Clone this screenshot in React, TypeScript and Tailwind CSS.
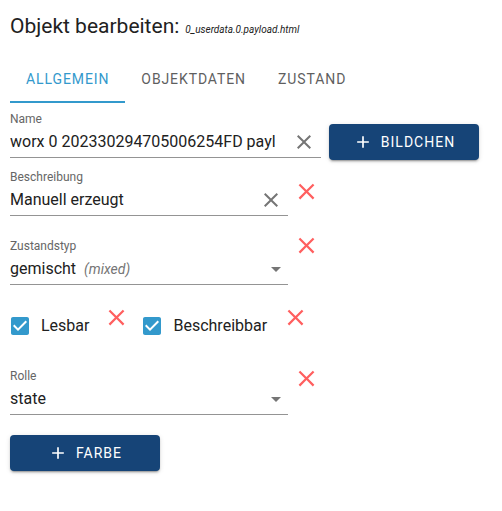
import React from "react";

const closePath =
  "M19 6.41 17.59 5 12 10.59 6.41 5 5 6.41 10.59 12 5 17.59 6.41 19 12 13.41 17.59 19 19 17.59 13.41 12z";

const CloseIcon = ({ size, className }: { size: number; className?: string }) => (
  <svg width={size} height={size} viewBox="0 0 24 24" className={className} fill="currentColor">
    <path d={closePath} />
  </svg>
);

const AddIcon = () => (
  <svg width={20} height={20} viewBox="0 0 24 24" fill="currentColor">
    <path d="M19 13h-6v6h-2v-6H5v-2h6V5h2v6h6v2z" />
  </svg>
);

const ArrowDrop = () => (
  <svg width={24} height={24} viewBox="0 0 24 24" fill="currentColor" className="text-[#757575]">
    <path d="M7 10l5 5 5-5z" />
  </svg>
);

const CheckBoxIcon = () => (
  <svg width={24} height={24} viewBox="0 0 24 24" className="text-[#3399cc]" fill="currentColor">
    <path d="M19 3H5c-1.11 0-2 .9-2 2v14c0 1.1.89 2 2 2h14c1.11 0 2-.9 2-2V5c0-1.1-.89-2-2-2zm-9 14-5-5 1.41-1.41L10 14.17l7.59-7.59L19 8l-9 9z" />
  </svg>
);

const RedX = ({ className }: { className?: string }) => (
  <CloseIcon size={27} className={`text-[#ff5f5f] shrink-0 ${className ?? ""}`} />
);

const Button = ({ label }: { label: string }) => (
  <button className="w-[150px] h-[36px] rounded-[4px] bg-[#164477] text-white flex items-center justify-center gap-[8px] text-[14px] font-normal tracking-[1px] uppercase shadow-[0_3px_1px_-2px_rgba(0,0,0,0.2),0_2px_2px_0_rgba(0,0,0,0.14),0_1px_5px_0_rgba(0,0,0,0.12)]">
    <AddIcon />
    <span>{label}</span>
  </button>
);

const Field = ({
  label,
  width,
  children,
}: {
  label: string;
  width: string;
  children: React.ReactNode;
}) => (
  <div className={`${width} shrink-0`}>
    <div className="h-[16px] text-[12px] leading-[16px] text-[#666666]">{label}</div>
    <div className="h-[31px] flex items-center border-b border-[#949494] text-[16px] text-[#212121]">
      {children}
    </div>
  </div>
);

export default function App() {
  return (
    <div className="w-[502px] h-[511px] bg-white pl-[10px] font-['Roboto',sans-serif] text-[#212121]">
      {/* Title */}
      <div className="pt-[10px] h-[55px] flex items-baseline">
        <span className="text-[21px] leading-[32px]">Objekt bearbeiten:</span>
        <span className="ml-[6px] text-[10px] italic">0_userdata.0.payload.html</span>
      </div>

      {/* Tabs */}
      <div className="flex h-[48px] text-[14px] font-normal tracking-[0.9px] uppercase">
        <div className="relative px-[16px] flex items-center text-[#3399cc]">
          Allgemein
          <div className="absolute left-0 right-0 bottom-0 h-[2px] bg-[#3399cc]" />
        </div>
        <div className="px-[16px] flex items-center text-[#5f5f5f]">Objektdaten</div>
        <div className="px-[16px] flex items-center text-[#5f5f5f]">Zustand</div>
      </div>

      {/* Name */}
      <div className="flex mt-[8px]">
        <Field label="Name" width="w-[311px]">
          <input
            readOnly
            value="worx 0 202330294705006254FD payload.html"
            className="w-[265px] bg-transparent outline-none"
          />
          <CloseIcon size={24} className="ml-auto mr-[5px] text-[#757575]" />
        </Field>
        <div className="ml-[8px] mt-[13px]">
          <Button label="Bildchen" />
        </div>
      </div>

      {/* Beschreibung */}
      <div className="flex mt-[9px]">
        <Field label="Beschreibung" width="w-[278px]">
          <span>Manuell erzeugt</span>
          <CloseIcon size={24} className="ml-auto mr-[5px] text-[#757575]" />
        </Field>
        <RedX className="ml-[5px] mt-[9px]" />
      </div>

      {/* Zustandstyp */}
      <div className="flex mt-[22px]">
        <Field label="Zustandstyp" width="w-[278px]">
          <span>gemischt</span>
          <span className="ml-[8px] text-[14px] italic text-[#757575]">(mixed)</span>
          <span className="ml-auto">
            <ArrowDrop />
          </span>
        </Field>
        <RedX className="ml-[5px] -mt-[6px]" />
      </div>

      {/* Checkboxes */}
      <div className="flex items-start mt-[24px] h-[40px]">
        <div className="flex items-center -ml-[2px] mt-[5px]">
          <CheckBoxIcon />
          <span className="ml-[9px] text-[16px]">Lesbar</span>
        </div>
        <RedX className="ml-[14px] -mt-[5px]" />
        <div className="flex items-center ml-[10px] mt-[5px]">
          <CheckBoxIcon />
          <span className="ml-[9px] text-[16px]">Beschreibbar</span>
        </div>
        <RedX className="ml-[15px] -mt-[5px]" />
      </div>

      {/* Rolle */}
      <div className="flex mt-[19px]">
        <Field label="Rolle" width="w-[278px]">
          <span>state</span>
          <span className="ml-auto">
            <ArrowDrop />
          </span>
        </Field>
        <RedX className="ml-[5px] -mt-[3px]" />
      </div>

      <div className="mt-[20px]">
        <Button label="Farbe" />
      </div>
    </div>
  );
}
